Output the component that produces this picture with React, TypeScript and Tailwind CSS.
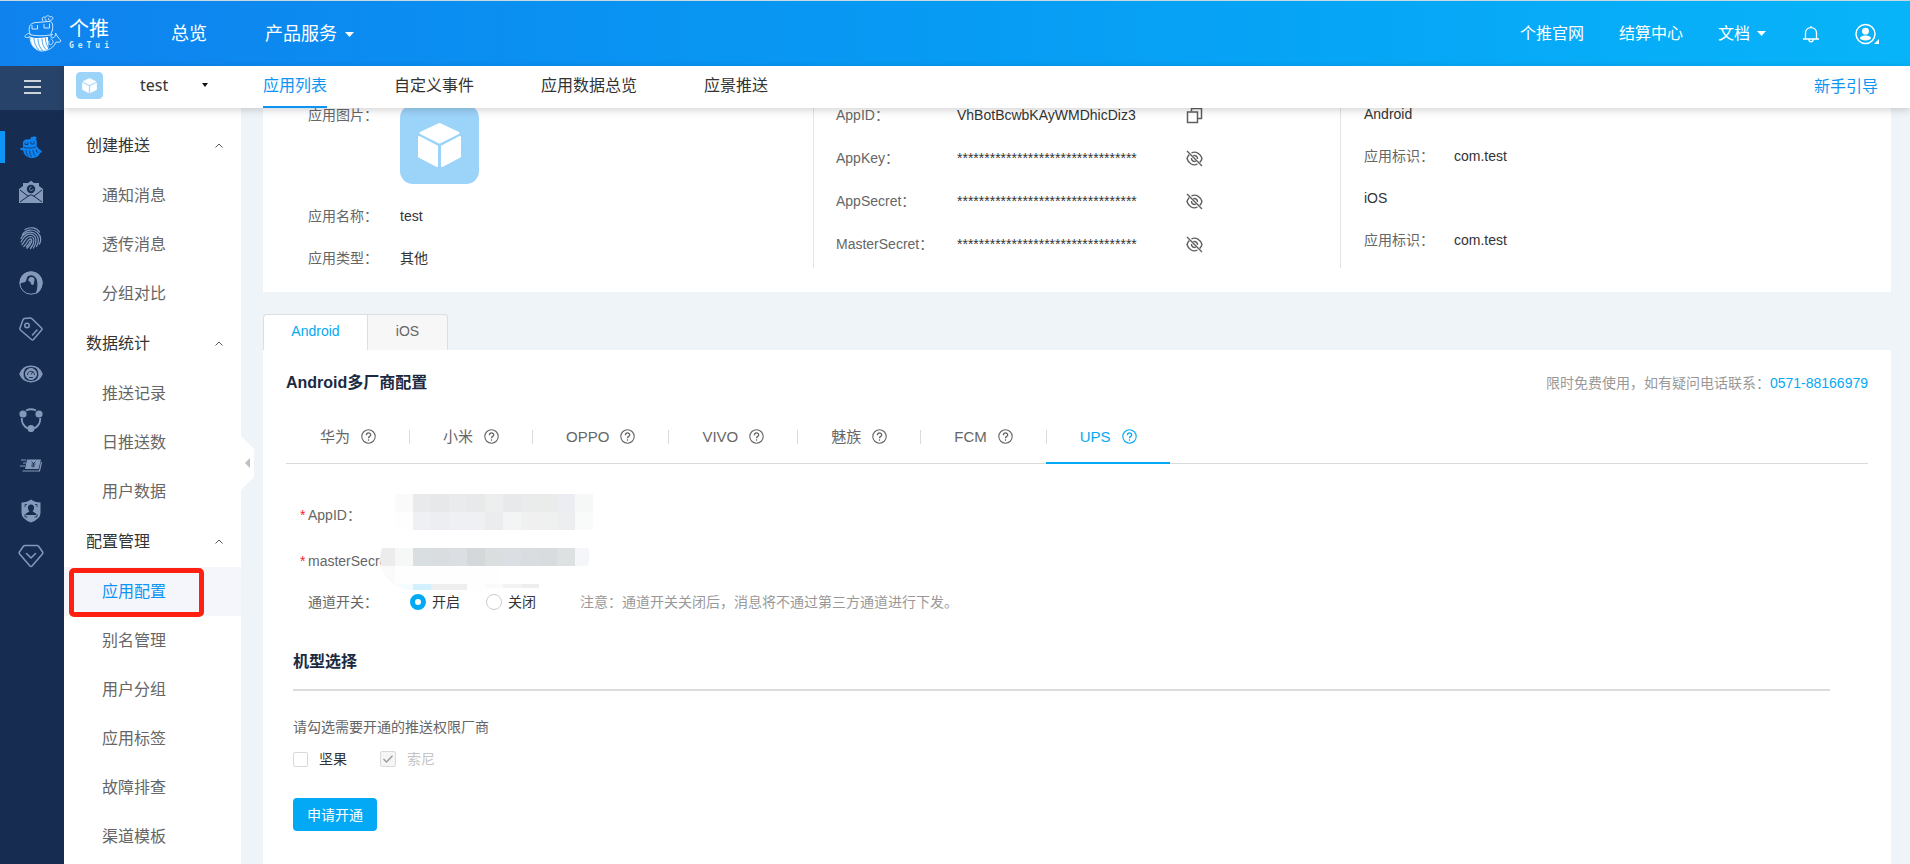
import React, { useState } from "react";

const FONT = "font-['Liberation_Sans','Noto_Sans_CJK_SC',sans-serif]";
const UI_FONT = "font-['Noto_Sans','Noto_Sans_CJK_SC',sans-serif]";

/* ---------- logos and icons ---------- */

function WhaleLogo() {
  return (
    <svg width="38" height="38" viewBox="0 0 38 38" fill="none" stroke="#cfe8ff" strokeWidth="1" strokeLinecap="round">
      <path d="M6 19C4 13 5 8 12 7.5L25 6.5C29 6.5 29 10 28.5 15" />
      <path d="M6 19.5C12 21.500 22 21 28.500 19.500" />
      <path d="M19 6C17 3 19 1 21.500 2.500C22 0.500 25 0 26 2C29 0.500 30 4 27.500 5C26 6 24 5 24.500 3.500M21 3.500C22.500 4 22 6 22 6.500" />
      <path d="M8 10.500V14H13.500V10.500M20 9.500V13H25.500V9" />
      <path d="M5.500 18C2 19 0.500 21 1 22C3 23 5 22.500 6 21.500" />
      <path d="M28.500 15C27 18 26 21 28 23C31 23 32 20 31.500 18C33 22 36 24 37 26C35 28 33 27 32 27C30 32 25 36 17 36C10 35 6 29 6 22" />
      <path d="M25 26C24 29 26 31 28 29C30 27 29 25 27 24" />
      <path d="M6.500 22C11 23.500 18 23 24 22C24 28 25 32 24 34C20 36.500 13 36 9.500 31.500C7.500 29 6.500 25 6.500 22Z" fill="#ffffff" stroke="none" />
      <path d="M10 23.500C10 28 12 32 15 35M14 24C14 29 16 33 18.500 35.500M18 24C18 29 20 33 22 34.500M21.500 23.500C21.500 28 23 31 24.500 33" stroke="#3a9cf3" strokeWidth="0.9" />
    </svg>
  );
}

function Whale() {
  return (
    <svg width="24" height="24" viewBox="0 0 24 24" fill="#0d84f2">
      <path d="M4 10C3.500 6 5 4.500 8 4.500L12 4C11 2.500 12 1.500 13.500 2.200C14 1 16 .8 16.500 2C18 1.500 18.500 3.500 16.500 4C18 5 18 8 17.500 11L20 14C21.500 15 22.500 15.500 23 17L21 18C20 21 17 23 12.500 23C7 22.500 4.500 19 4.300 15.500C2.500 15.500 1 14.500 .8 13.500L4 12.500Z" />
      <path d="M6 7.500V9.500H9V7M12 6.500V9H15V6M4.500 12.300C8 13.500 13 13.300 17 12M7 15C7 18 8 20 9.500 21.500M10.500 15.300C10.500 18 11.500 20.500 13 22M14 15C14 17.500 15 19.500 16.500 21M17.500 14.500C17 16.500 18 18 19.500 17" fill="none" stroke="#162c51" strokeWidth="0.7" />
    </svg>
  );
}

const MUTED = "#8599ba";
const RAIL = "#162c51";

const railIcons: { label: string; node: React.ReactNode }[] = [
  { label: "个推推送", node: <Whale /> },
  {
    label: "消息",
    node: (
      <svg width="24" height="24" viewBox="0 0 24 24">
        <path d="M0 9L4 6V3H9L12 .8L15 3H20V6L24 9V23H0Z" fill={MUTED} />
        <circle cx="12" cy="9" r="4.200" fill={RAIL} />
        <path d="M12.500 6.800C10.500 6.800 9.800 9.300 11.500 10.300C12.800 11 14 10 13.800 9" fill="none" stroke={MUTED} strokeWidth="1" />
        <path d="M1 10L9.500 16.500M23 10L14.500 16.500M1 22L10 15.500Q12 14.200 14 15.500L23 22" fill="none" stroke={RAIL} strokeWidth="1" />
      </svg>
    ),
  },
  {
    label: "指纹",
    node: (
      <svg width="24" height="24" viewBox="0 0 24 24" fill="none" stroke={MUTED} strokeWidth="1.200" strokeLinecap="round">
        <path d="M6 3.500C11 .5 17.500 1.500 20.500 6M3.500 8.500C7 3.500 14 2.500 18.500 6.500C22 10 22.500 14 20.500 18M2 12.500C4.500 7 10 4.800 14.500 6.800C20 9.500 20.500 15.500 17.500 20.500M2 16C4.500 11 8 7.500 12 8.200C17.500 9.500 18.500 15.500 14.500 22M3 18.500C6 15.500 7 10.500 11.500 10.500C16 11 16 17 11.500 22.500M4.800 20.500C8.500 17.500 8.500 13 11.500 12.800C14 13.500 12.500 18.500 8 22.300M11.300 15.200C11 17 9.500 19 7.500 20.800" />
      </svg>
    ),
  },
  {
    label: "客服",
    node: (
      <svg width="24" height="24" viewBox="0 0 24 24">
        <circle cx="12" cy="12" r="11.200" fill="none" stroke={MUTED} strokeWidth="1" />
        <path d="M1 13C0 5 6 .5 12 .5C20 .5 24 7 23.500 12C23 18 20 22 16.500 23C18.500 19 19 12 17.500 8C15.500 3.500 10 3 8 6.500C7 9 7.500 10.500 6 11C4 11.500 2 12 1 13Z" fill={MUTED} />
        <path d="M9.500 8C11 5 15.500 5.500 15.500 8.500C15.500 11 14.500 11.500 15 13L13.500 14C12 13.500 11.500 12.500 11.500 11L9.500 10Z" fill={MUTED} />
      </svg>
    ),
  },
  {
    label: "标签",
    node: (
      <svg width="24" height="24" viewBox="0 0 24 24" fill="none" stroke={MUTED} strokeWidth="1.500" strokeLinejoin="round" strokeLinecap="round">
        <path d="M1 11L4 2.800Q4.500 1.700 5.500 1.500L11 1Q12.200 .9 13 1.700L22.500 11Q23.500 12 22.600 13L14.500 22.500Q13.500 23.500 12.500 22.500L1.700 13.200Q.6 12.200 1 11Z" />
        <circle cx="8" cy="8.500" r="2.200" />
        <path d="M18 13L13.500 18" />
      </svg>
    ),
  },
  {
    label: "监控",
    node: (
      <svg width="24" height="24" viewBox="0 0 24 24" fill="none" stroke={MUTED}>
        <path d="M1 12C5 1.800 19 1.800 23 12C19 22.200 5 22.200 1 12Z" strokeWidth="1.500" />
        <path d="M1.500 12C3 8 5 6.500 7 5.500C3.500 9.500 3.500 14.500 7 18.500C5 17.500 3 16 1.500 12ZM22.500 12C21 8 19 6.500 17 5.500C20.500 9.500 20.500 14.500 17 18.500C19 17.500 21 16 22.500 12Z" fill={MUTED} strokeWidth="0.5" />
        <circle cx="12" cy="12" r="5.500" fill={MUTED} strokeWidth="1" />
        <path d="M8.500 13C8.500 8 15.500 8 15.500 13M12 12.500L14 9.500M10 15.500H14" stroke={RAIL} strokeWidth="0.9" />
      </svg>
    ),
  },
  {
    label: "连接",
    node: (
      <svg width="24" height="24" viewBox="0 0 24 24" fill="none" stroke={MUTED} strokeWidth="1.800">
        <path d="M7 2.500C10 1 14 1 17 2.500M2.800 10C2.500 15 5 18.500 9 20.500M21.200 10C21.500 15 19 18.500 15 20.500" />
        <g fill={MUTED} stroke="none">
          <circle cx="4" cy="6" r="3.600" />
          <circle cx="20" cy="6" r="3.600" />
          <circle cx="12" cy="20.500" r="3.600" />
        </g>
      </svg>
    ),
  },
  {
    label: "计费",
    node: (
      <svg width="22" height="14" viewBox="0 0 22 14">
        <path d="M7 1.500H21L18.500 11H5Z" fill={MUTED} />
        <path d="M1 2H6M3 5H6M0 8H5M2.500 13H19.500L21.500 4" fill="none" stroke={MUTED} strokeWidth="1.200" />
        <path d="M11.500 3.500L13.500 5.500L15.500 3.500M13.500 5.500L13 9.500M11.500 6H15.500M11 8H15" fill="none" stroke={RAIL} strokeWidth="0.8" />
      </svg>
    ),
  },
  {
    label: "安全",
    node: (
      <svg width="20" height="24" viewBox="0 0 20 24">
        <path d="M10 .5Q14 3.500 19.500 3.500V14Q19.500 20 10 23.500Q.5 20 .5 14V3.500Q6 3.500 10 .5Z" fill={MUTED} />
        <path d="M10 5.500C12.500 5.500 13.300 7.500 13 9.500C12.700 11 12 11.500 11.700 12.500L15 14.500V16H5V14.500L8.300 12.500C8 11.500 7.300 11 7 9.500C6.700 7.500 7.500 5.500 10 5.500Z" fill={RAIL} />
        <path d="M4 8V5.500H6M14 5.500H16V8M4 15V18H6.500M13.500 18H16V15" fill="none" stroke={RAIL} strokeWidth="0.8" />
      </svg>
    ),
  },
  {
    label: "会员",
    node: (
      <svg width="26" height="24" viewBox="0 0 26 24" fill="none" stroke={MUTED} strokeWidth="1.500" strokeLinejoin="round" strokeLinecap="round">
        <path d="M7 1.500H19Q20 1.500 20.600 2.300L24.600 8Q25.200 9 24.400 9.900L14 22Q13 23 12 22L1.600 9.900Q.8 9 1.400 8L5.400 2.300Q6 1.500 7 1.500Z" />
        <path d="M8.500 9.500L13 14L17.500 9.500" />
      </svg>
    ),
  },
];

function CubeTile({ className }: { className: string }) {
  return (
    <svg viewBox="0 0 79 79" className={className} aria-hidden="true">
      <rect width="79" height="79" rx="13" fill="#9cd3f9" />
      <g fill="#fff" stroke="#fff" strokeWidth="2" strokeLinejoin="round">
        <path d="M39.500 19L58.500 28L39.500 37.500L20.500 28Z" />
        <path d="M19 32L37 41.500V61L19 51.500Z" />
        <path d="M60 32L42 41.500V61L60 51.500Z" />
      </g>
    </svg>
  );
}

function EyeOffIcon() {
  return (
    <svg width="17" height="17" viewBox="0 0 17 17" fill="none" stroke="#5f5f5f" strokeWidth="1.400">
      <path d="M5.500 2.800C10 .8 14.500 3.500 16 8.500C15.500 10 14.800 11.500 13.700 12.600M11.500 14C7 16.300 2.500 13.500 1 8.500C1.500 6.800 2.200 5.500 3.300 4.400" />
      <path d="M7.300 5.700C9.500 4.800 11.700 6.500 11.500 9M9.800 11.200C7.500 12 5.200 10.500 5.500 8M1 1L16 16" />
    </svg>
  );
}

function CopyIcon() {
  return (
    <svg width="17" height="17" viewBox="0 0 17 17" fill="none" stroke="#5f5f5f" strokeWidth="1.500">
      <path d="M5.500 4.500V1.500H15.500V11.500H11.500" />
      <rect x="1.500" y="5" width="10" height="10.500" />
    </svg>
  );
}

function HelpIcon() {
  return (
    <svg width="15" height="15" viewBox="0 0 15 15" fill="none" stroke="currentColor" strokeWidth="1.100" aria-hidden="true">
      <circle cx="7.500" cy="7.500" r="6.700" />
      <path d="M5.400 6.200C5.400 3.200 9.700 3.200 9.700 5.900C9.700 7.500 7.500 7.300 7.500 9.200" strokeWidth="1.300" />
      <circle cx="7.500" cy="11" r=".5" fill="currentColor" strokeWidth=".6" />
    </svg>
  );
}

function Caret() {
  return (
    <svg width="9" height="5" viewBox="0 0 9 5" fill="currentColor" aria-hidden="true">
      <path d="M0 0H9L4.500 5Z" />
    </svg>
  );
}

/* ---------- header ---------- */

function Header() {
  return (
    <header className={`flex h-[66px] items-center border-t border-[#c9d9e2] bg-linear-to-r from-[#0f82ee] to-[#08b4f9] text-white ${FONT}`}>
      <a href="#home" className="ml-[24px] flex w-[147px] items-center gap-[7px]">
        <WhaleLogo />
        <span className="flex w-[40px] flex-col">
          <span className="text-[20px] leading-[24px]">个推</span>
          <span className="flex justify-between font-['DejaVu_Sans_Mono',monospace] text-[8px] leading-[10px] font-bold text-[#d6ebff]">
            <span>G</span><span>e</span><span>T</span><span>u</span><span>i</span>
          </span>
        </span>
      </a>
      <nav className="flex flex-1 items-center pt-px text-[18px]">
        <a href="#overview">总览</a>
        <button className="ml-[58px] flex items-center gap-[8px]">
          产品服务 <Caret />
        </button>
      </nav>
      <nav className="flex items-center text-[16px]">
        <a href="#site">个推官网</a>
        <a href="#billing" className="ml-[35px]">结算中心</a>
        <button className="ml-[35px] flex items-center gap-[7px]">
          文档 <Caret />
        </button>
        <button aria-label="通知" className="ml-[36px]">
          <svg width="18" height="18" viewBox="0 0 18 18" fill="none" stroke="#fff" strokeWidth="1.300">
            <path d="M1 14H17M3.500 14V8C3.500 .8 14.500 .8 14.500 8V14M9 2.500V1M6.800 14.500C7 17.500 11 17.500 11.200 14.500" />
          </svg>
        </button>
        <button aria-label="账户" className="mr-[31px] ml-[35px]">
          <svg width="24" height="22" viewBox="0 0 24 22" fill="none">
            <circle cx="10.500" cy="11" r="9.500" stroke="#fff" strokeWidth="1.500" />
            <circle cx="10.500" cy="8.200" r="3.400" fill="#fff" />
            <path d="M5 15.500C5 11.500 16 11.500 16 15.500C14 18 7 18 5 15.500Z" fill="#fff" />
            <path d="M24 16V21H19Z" fill="#fff" />
          </svg>
        </button>
      </nav>
    </header>
  );
}

function SubHeader() {
  const tabs = ["应用列表", "自定义事件", "应用数据总览", "应景推送"];
  return (
    <div className={`relative z-10 flex h-[42px] bg-white text-[16px] text-[#333] shadow-[0_2px_8px_rgba(0,0,0,0.18)] ${UI_FONT}`}>
      <label className="relative flex w-[199px] items-center pb-1 pl-[12px]">
        <CubeTile className="size-[27px]" />
        <select aria-label="选择应用" className="ml-[37px] w-[90px] appearance-none bg-transparent outline-none">
          <option>test</option>
        </select>
        <svg width="6" height="4" viewBox="0 0 6 4" className="pointer-events-none absolute right-[55px]" aria-hidden="true">
          <path d="M0 0H6L3 4Z" fill="#111" />
        </svg>
      </label>
      <nav className={`flex flex-1 gap-[67px] ${FONT}`}>
        {tabs.map((t, i) => (
          <a
            key={t}
            href="#tab"
            className={`border-b-2 leading-[39px] ${i === 0 ? "border-[#0d94f5] text-[#0d94f5]" : "border-transparent"}`}
          >
            {t}
          </a>
        ))}
      </nav>
      <a href="#guide" className="pr-[32px] leading-[40px] text-[#0d94f5]">新手引导</a>
    </div>
  );
}

/* ---------- side navigation ---------- */

function Rail() {
  return (
    <div className="flex w-[64px] shrink-0 flex-col bg-[#162c51]">
      <button aria-label="菜单" className="flex h-[44px] items-center justify-center bg-[#284369] pb-0.5">
        <svg width="17" height="14" viewBox="0 0 17 14" stroke="#cdd3dc" strokeWidth="2">
          <path d="M0 1H17M0 7H17M0 13H17" />
        </svg>
      </button>
      <nav className="mt-[21px] flex h-[441px] flex-col justify-between">
        {railIcons.map((r, i) => (
          <a
            key={r.label}
            href="#product"
            aria-label={r.label}
            className={`flex h-[32px] items-center justify-center border-l-[5px] pr-[7px] ${i === 0 ? "border-[#0d94f5]" : "border-transparent"}`}
          >
            {r.node}
          </a>
        ))}
      </nav>
    </div>
  );
}

const groups = [
  { title: "创建推送", items: ["通知消息", "透传消息", "分组对比"] },
  { title: "数据统计", items: ["推送记录", "日推送数", "用户数据"] },
  { title: "配置管理", items: ["应用配置", "别名管理", "用户分组", "应用标签", "故障排查", "渠道模板"] },
];

function Sidebar() {
  return (
    <aside className={`relative w-[177px] shrink-0 bg-white pt-[12px] text-[16px] ${FONT}`}>
      {groups.map((g) => (
        <section key={g.title}>
          <button className="flex h-[51px] w-full items-center justify-between pr-[18px] pl-[22px] text-[#333]">
            {g.title}
            <svg width="8" height="5" viewBox="0 0 8 5" fill="none" stroke="#555" aria-hidden="true">
              <path d="M.5 4.500L4 1L7.500 4.500" />
            </svg>
          </button>
          {g.items.map((it) =>
            it === "应用配置" ? (
              <a key={it} href="#item" className="relative flex h-[49px] items-center bg-[#f4f6fb] pl-[38px] text-[#0d94f5]">
                {it}
                <span className="absolute top-px left-[5px] h-[49px] w-[135px] rounded-[5px] border-[5px] border-[#ff2012]" />
              </a>
            ) : (
              <a key={it} href="#item" className="flex h-[49px] items-center pl-[38px] text-[#666]">
                {it}
              </a>
            ),
          )}
        </section>
      ))}
      <button aria-label="收起侧栏" className="absolute top-[328px] left-full">
        <svg width="13" height="54" viewBox="0 0 13 54">
          <path d="M0 0L13 13V41L0 54Z" fill="#fff" />
          <path d="M9 22V32L4 27Z" fill="#bfbfbf" />
        </svg>
      </button>
    </aside>
  );
}

/* ---------- application details ---------- */

const keys = [
  ["AppID：", "VhBotBcwbKAyWMDhicDiz3"],
  ["AppKey：", "*********************************"],
  ["AppSecret：", "*********************************"],
  ["MasterSecret：", "*********************************"],
];

function AppDetails() {
  return (
    <section className="grid grid-cols-[550fr_527fr_551fr] bg-white pb-6 text-[14px] leading-[20px] text-[#666]">
      <dl className="grid grid-cols-[92px_1fr] pt-px pl-[45px]">
        <dt>应用图片：</dt>
        <dd><CubeTile className="size-[79px]" /></dd>
        <dt className="mt-[22px]">应用名称：</dt>
        <dd className="mt-[22px] text-[#333]">test</dd>
        <dt className="mt-[22px]">应用类型：</dt>
        <dd className="mt-[22px] text-[#333]">其他</dd>
      </dl>
      <div className="flex flex-col gap-[21px] border-l border-[#e4e4e4] pl-[22px]">
        {keys.map(([k, v], i) => (
          <div key={k} className="flex h-[22px] items-center">
            <span className="w-[121px]">{k}</span>
            <span className="w-[229px] text-[#333]">{v}</span>
            <button aria-label={i === 0 ? "复制" : "显示"}>{i === 0 ? <CopyIcon /> : <EyeOffIcon />}</button>
          </div>
        ))}
      </div>
      <div className="flex flex-col gap-[22px] border-l border-[#e4e4e4] pl-[23px]">
        {["Android", "iOS"].map((os) => (
          <React.Fragment key={os}>
            <div className="text-[#333]">{os}</div>
            <div className="flex">
              <span className="w-[90px]">应用标识：</span>
              <span className="text-[#333]">com.test</span>
            </div>
          </React.Fragment>
        ))}
      </div>
    </section>
  );
}

/* ---------- redacted values ---------- */

const row1 = ["#fafafa", "#e9eaec", "#e7e8ea", "#eaebed", "#e8e9ea", "#edefee", "#e8e9eb", "#eaecec", "#eaecec", "#ecedf2", "#f6f8f8"];
const row2 = ["#fefefe", "#eff0f4", "#edeef1", "#eff0f3", "#eff0f3", "#ebecee", "#f3f5f4", "#f0f0f0", "#eff0f0", "#edeef0", "#f8fbfa"];
const row3 = ["#f6f7f7", "#d9dee1", "#d9dddf", "#dbdfe3", "#d4d8db", "#dadedf", "#dbdfe3", "#d9dde0", "#d8dcde", "#dde1e2", "#f4f6f9"];

function Redaction() {
  return (
    <svg width="214" height="98" viewBox="0 0 214 98" className="pointer-events-none absolute top-[30px] left-[94px]" aria-hidden="true">
      {row1.map((c, i) => <rect key={i} x={15 + i * 18} y="0" width="18" height="18" fill={c} />)}
      {row2.map((c, i) => <rect key={i} x={15 + i * 18} y="18" width="18" height="18" fill={c} />)}
      <path d="M3 54H208Q211 62 208 72H120V96H28Q2 92 0 64Q0 58 3 54Z" fill="#fefefe" />
      <path d="M2 54H15V72H1Q-1 62 2 54Z" fill="#ececec" />
      {row3.slice(0, 10).map((c, i) => <rect key={i} x={15 + i * 18} y="54" width="18" height="18" fill={c} />)}
      <path d="M195 54H208Q211 62 208 72H195Z" fill={row3[10]} />
      <path d="M1 72H15V90Q4 84 1 72Z" fill="#fafafa" />
      <path d="M15 90H33V96H28Q20 95 15 90Z" fill="#f5fcff" />
      <rect x="33" y="90" width="18" height="6" fill="#d2f0fd" />
      <rect x="51" y="90" width="36" height="6" fill="#efefef" />
      <rect x="105" y="90" width="18" height="4" fill="#fafafa" />
      <rect x="123" y="90" width="18" height="4" fill="#f3f3f3" />
      <rect x="141" y="90" width="18" height="4" fill="#eeeeee" />
    </svg>
  );
}

/* ---------- vendor configuration ---------- */

const vendors = ["华为", "小米", "OPPO", "VIVO", "魅族", "FCM", "UPS"];

const radioClass =
  "size-[16px] appearance-none rounded-full border border-[#ccc] bg-white checked:border-[5px] checked:border-[#03a9f4]";

function VendorConfig() {
  const [enabled, setEnabled] = useState(true);
  const [nut, setNut] = useState(false);
  return (
    <section className="flex-1 bg-white px-[23px] pt-[21px] text-[14px] leading-[20px] text-[#666]">
      <div className="flex items-center justify-between">
        <h2 className="text-[16px] leading-[24px] font-bold text-[#1b2a41]">Android多厂商配置</h2>
        <p className="text-[#999]">
          限时免费使用，如有疑问电话联系：
          <a href="tel:0571-88166979" className="text-[#03a9f4]">0571-88166979</a>
        </p>
      </div>

      <div role="tablist" className="mt-[16px] flex h-[53px] border-b border-[#d9dbde] text-[15px]">
        {vendors.map((v, i) => {
          const active = v === "UPS";
          return (
            <button
              key={v}
              role="tab"
              aria-selected={active}
              className={`-mb-px flex items-center border-b-2 pr-[33px] ${active ? "border-[#03a9f4] text-[#03a9f4]" : "border-transparent"}`}
            >
              <span className={`mr-[33px] h-[14px] w-px ${i === 0 ? "bg-transparent" : "bg-[#d9dbde]"}`} />
              <span className="mr-[11px]">{v}</span>
              <HelpIcon />
            </button>
          );
        })}
      </div>

      <form className="relative pt-[41px]" onSubmit={(e) => e.preventDefault()}>
        <div className="flex pl-[14px]">
          <span className="w-[8px] text-[#f5222d]">*</span>AppID：
        </div>
        <div className="mt-[26px] flex pl-[14px]">
          <span className="w-[8px] text-[#f5222d]">*</span>masterSecret：
        </div>
        <div className="mt-[21px] flex items-center pl-[22px]">
          <span className="w-[102px]">通道开关：</span>
          <label className="flex w-[76px] items-center gap-[6px] text-[#333]">
            <input type="radio" name="channel" className={radioClass} checked={enabled} onChange={() => setEnabled(true)} />
            开启
          </label>
          <label className="flex w-[94px] items-center gap-[6px] text-[#333]">
            <input type="radio" name="channel" className={radioClass} checked={!enabled} onChange={() => setEnabled(false)} />
            关闭
          </label>
          <span className="text-[#999]">注意：通道开关关闭后，消息将不通过第三方通道进行下发。</span>
        </div>
        <Redaction />

        <div className="mt-[38px] mr-[38px] ml-[7px]">
          <h3 className="border-b-2 border-[#dcdcdc] pb-[15px] text-[16px] leading-[24px] font-bold text-[#1b2a41]">机型选择</h3>
          <p className="mt-[26px]">请勾选需要开通的推送权限厂商</p>
          <div className="mt-[12px] flex gap-[33px]">
            <label className="flex items-center gap-[11px] text-[#333]">
              <input
                type="checkbox"
                className="size-[15px] appearance-none rounded-xs border border-[#d9d9d9] bg-white checked:bg-[#03a9f4]"
                checked={nut}
                onChange={(e) => setNut(e.target.checked)}
              />
              坚果
            </label>
            <label className="relative flex items-center gap-[11px] text-[#c4c4c4]">
              <input type="checkbox" className="size-[16px] appearance-none rounded-xs border border-[#d9d9d9] bg-[#f5f5f5]" checked disabled readOnly />
              <svg width="10" height="8" viewBox="0 0 10 8" fill="none" stroke="#999" strokeWidth="1.300" className="pointer-events-none absolute left-[3px]" aria-hidden="true">
                <path d="M.5 4L3.500 7L9.500 .8" />
              </svg>
              索尼
            </label>
          </div>
          <button className="mt-[29px] h-[33px] rounded-sm bg-[#03a9f4] px-[14px] text-white">申请开通</button>
        </div>
      </form>
    </section>
  );
}

export default function App() {
  return (
    <div className={`flex min-h-screen flex-col bg-[#eef4f8] ${FONT}`}>
      <Header />
      <div className="flex flex-1">
        <Rail />
        <div className="flex min-w-0 flex-1 flex-col">
          <SubHeader />
          <div className="flex flex-1">
            <Sidebar />
            <main className="-mt-1 mr-[19px] ml-[22px] flex min-w-0 flex-1 flex-col">
              <AppDetails />
              <div role="tablist" className="mt-[22px] flex h-[36px] text-[14px]">
                <button role="tab" aria-selected="true" className="w-[105px] rounded-tl-sm border border-b-0 border-[#dcdfe2] bg-white pb-0.5 text-[#03a9f4]">
                  Android
                </button>
                <button role="tab" aria-selected="false" className="w-[80px] rounded-tr-sm border border-b-0 border-l-0 border-[#dcdfe2] bg-[#f7f7f7] pb-0.5 text-[#666]">
                  iOS
                </button>
              </div>
              <VendorConfig />
            </main>
          </div>
        </div>
      </div>
    </div>
  );
}
